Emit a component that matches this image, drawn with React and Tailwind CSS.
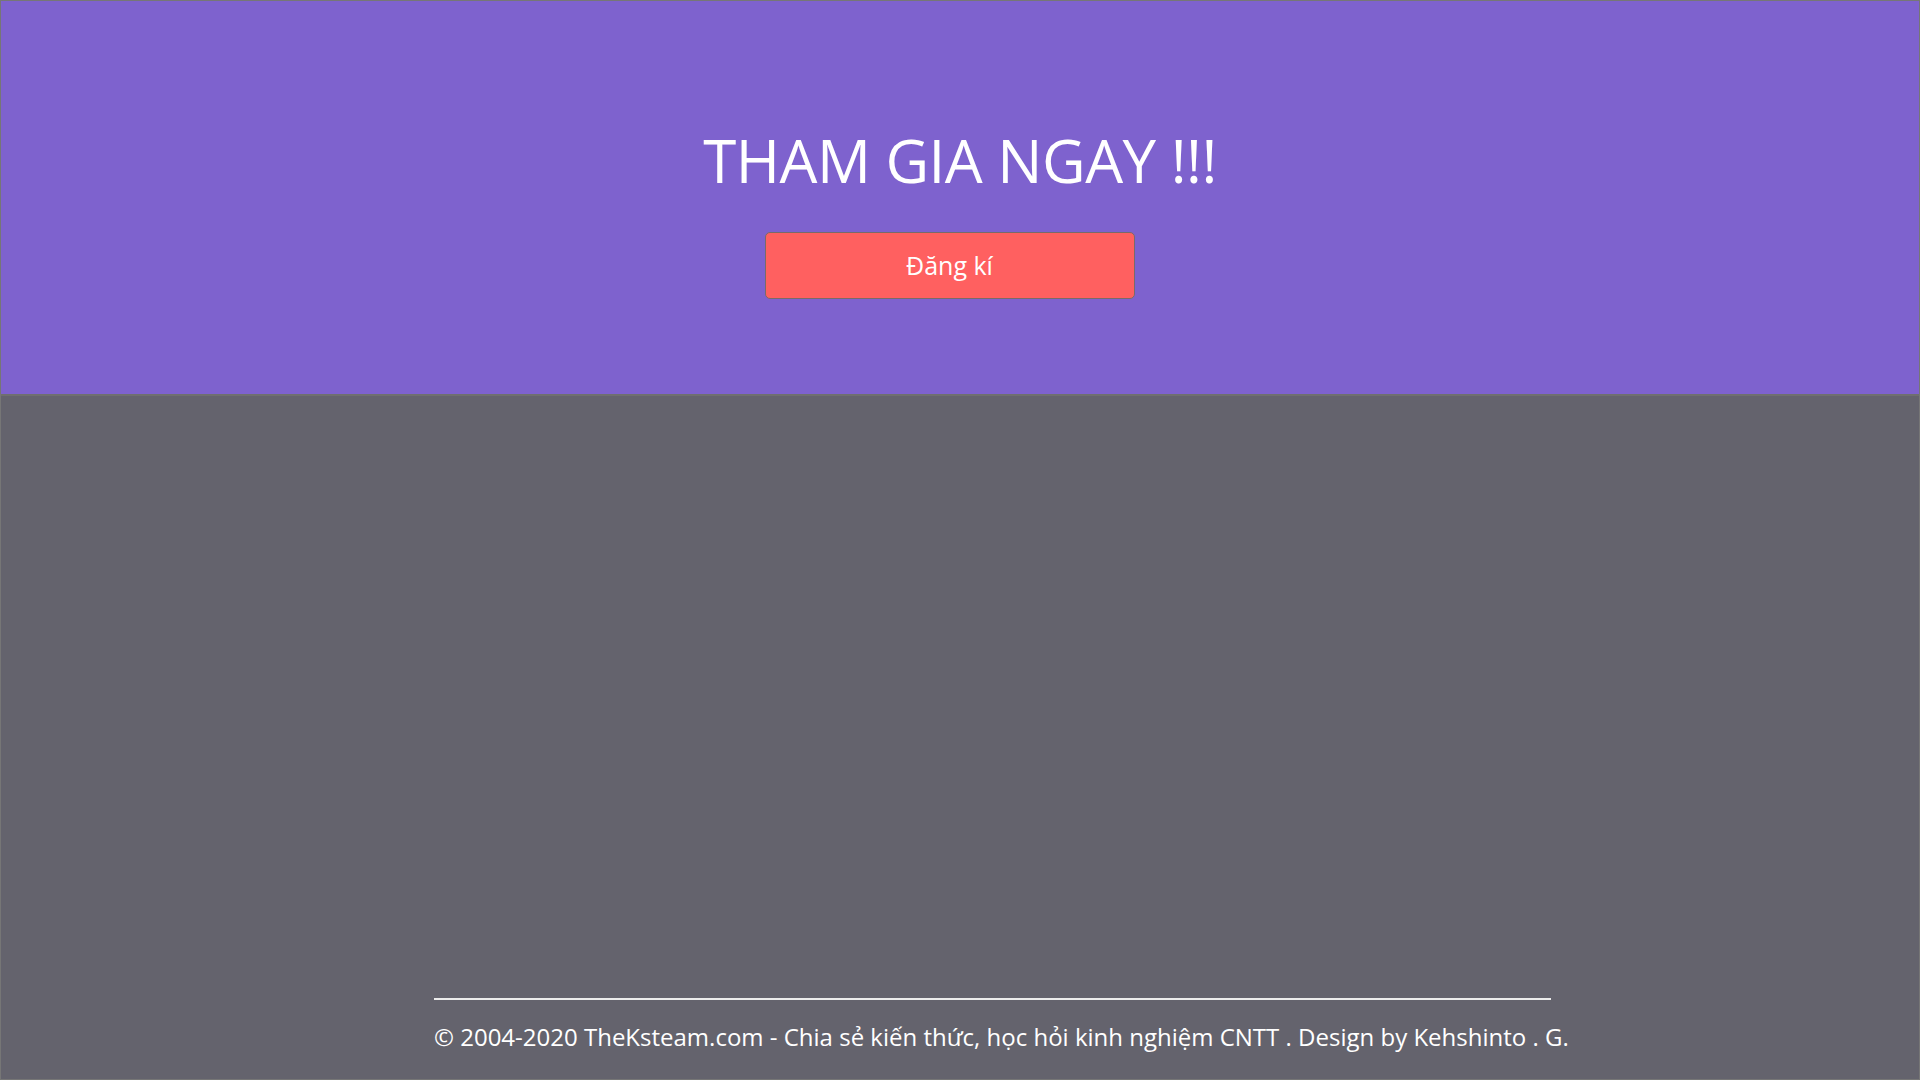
export default function App() {
  return (
    <div
      className="w-full h-screen flex flex-col border border-[#767676] bg-[#64636d] overflow-hidden"
      style={{ fontFamily: '"Open Sans", "Noto Sans", sans-serif' }}
    >
      {/* Banner */}
      <section className="h-[395px] shrink-0 bg-[#7e62ce] border-b-2 border-[#6f6f6f] flex flex-col items-center">
        <h1 className="mt-[122px] text-[60px] leading-[74px] text-white tracking-[-0.5px]">
          THAM GIA NGAY !!!
        </h1>
        <button className="mt-[35px] w-[370px] h-[67px] bg-[#ff6060] border border-[#7a6a6a] rounded-[5px] text-white text-[25px] ml-[-21px]">
          Đăng kí
        </button>
      </section>

      {/* Footer */}
      <div className="flex-1 flex flex-col justify-end">
        <div className="pl-[433px] pb-[25px]">
          <div className="w-[1117px] h-[2px] bg-[#ececec]"></div>
          <p className="mt-[20px] text-[24px] leading-[34px] text-white">
            © 2004-2020 TheKsteam.com - Chia sẻ kiến thức, học hỏi kinh nghiệm CNTT . Design by Kehshinto . G.
          </p>
        </div>
      </div>
    </div>
  );
}
